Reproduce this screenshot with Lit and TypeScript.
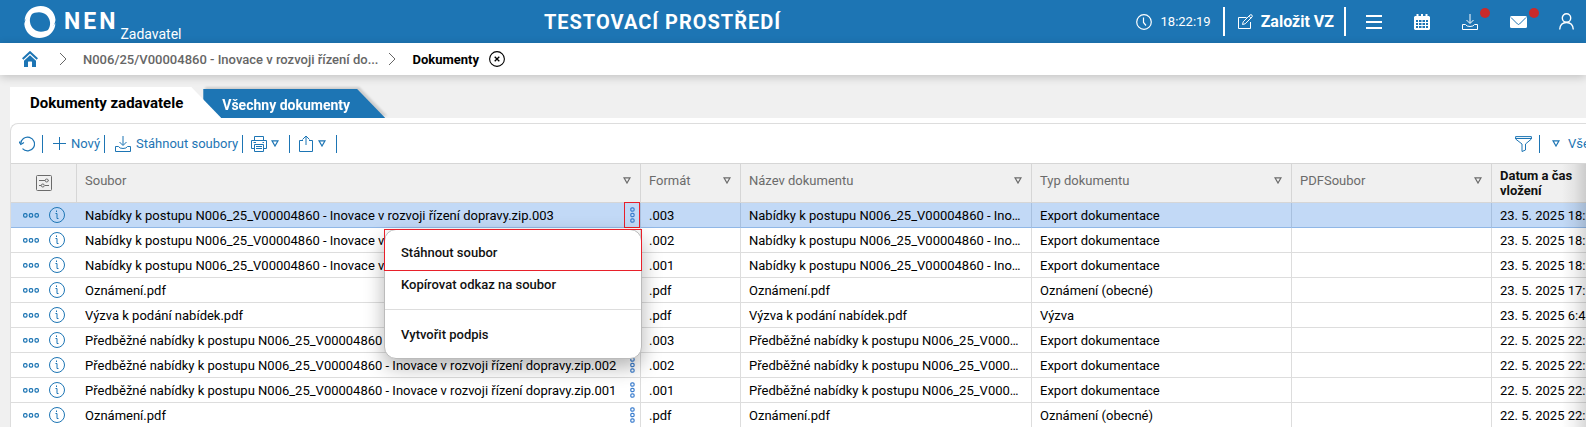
import { LitElement, html, css, svg } from "lit";
import { customElement, state } from "lit/decorators.js";

interface Doc {
  file: string;
  format: string;
  name: string;
  type: string;
  date: string;
}

const OFFER = "Nabídky k postupu N006_25_V00004860 - Inovace v rozvoji řízení dopravy.zip";
const EARLY = "Předběžné nabídky k postupu N006_25_V00004860 - Inovace v rozvoji řízení dopravy.zip";
const EXPORT = "Export dokumentace";

const doc = (base: string, format: string, type: string, date: string): Doc => ({
  file: base + format,
  format,
  name: base + format,
  type,
  date,
});

const DOCS: Doc[] = [
  doc(OFFER, ".003", EXPORT, "23. 5. 2025 18:20"),
  doc(OFFER, ".002", EXPORT, "23. 5. 2025 18:20"),
  doc(OFFER, ".001", EXPORT, "23. 5. 2025 18:20"),
  doc("Oznámení", ".pdf", "Oznámení (obecné)", "23. 5. 2025 17:10"),
  doc("Výzva k podání nabídek", ".pdf", "Výzva", "23. 5. 2025 6:45"),
  doc(EARLY, ".003", EXPORT, "22. 5. 2025 22:15"),
  doc(EARLY, ".002", EXPORT, "22. 5. 2025 22:15"),
  doc(EARLY, ".001", EXPORT, "22. 5. 2025 22:15"),
  doc("Oznámení", ".pdf", "Oznámení (obecné)", "22. 5. 2025 22:10"),
];

const icon = (w: number, h: number, body: unknown) => html`<svg
  width=${w}
  height=${h}
  viewBox="0 0 ${w} ${h}"
  fill="none"
  stroke="currentColor"
  aria-hidden="true"
>
  ${body}
</svg>`;

const logo = icon(32, 32, svg`
  <path fill="currentColor" stroke="none" d="M1.500 10C4 3.500 10 0 16.500 0C25 0 31 6 31.500 14C30.500 20.500 26.500 25.500 20.500 28C25 24 26.500 20 26 16C25.200 10 20.500 6.300 15 6.300C9 6.300 4 9.500 .7 15C.6 13.500 .9 11.700 1.500 10z"/>
  <path fill="currentColor" stroke="none" d="M30.500 22C28 28.500 22 32 15.500 32C7 32 1 26 .3 18C1.500 11.500 5.500 6.500 11.500 4C7 8 5.500 12 6 16C6.800 22 11.500 25.700 17 25.700C23 25.700 28 22.500 31.300 17C31.400 18.500 31.100 20.300 30.500 22z"/>`);
const clock = icon(16, 16, svg`<circle cx="8" cy="8" r="7.300" stroke-width="1.200"/><path stroke-width="1.200" d="M7.500 3.500V8.500L10 11.500"/>`);
const edit = icon(16, 16, svg`
  <path d="M9.500 3.500H1.500V14.500H13.500V8"/>
  <path d="M5.500 10.500L6.200 7.800L13 1Q14 .3 15 1.200Q15.700 2.200 15 3L8.200 9.800zM12 2.200L14 4.200"/>`);
const burger = icon(16, 14, svg`<path stroke-width="2" d="M0 1H16M0 7H16M0 13H16"/>`);
const calendar = icon(16, 16, svg`
  <path fill="currentColor" stroke="none" fill-rule="evenodd" d="M1 2H2.500V0H4.500V2H7V0H9V2H11.500V0H13.500V2H15L16 3V15L15 16H1L0 15V3zM2 6V14H14V6z"/>
  <path d="M2 8.500H14M2 11.500H14M4.500 6V14M8 6V14M11.500 6V14"/>`);
const download = icon(16, 16, svg`
  <path d="M8 0V9M4.500 6L8 9.500L11.500 6"/>
  <path d="M.5 10.500V15.500H15.500V10.500H12.500Q11.500 12.500 8 12.500Q4.500 12.500 3.500 10.500z"/>`);
const mail = icon(17, 12, svg`
  <rect width="17" height="12" rx="1.500" fill="currentColor" stroke="none"/>
  <path class="cut" d="M1 1.500L7.500 8Q8.500 9 9.500 8L16 1.500"/>`);
const user = icon(15, 17, svg`<circle cx="7.500" cy="5" r="4.200" stroke-width="1.400"/><path stroke-width="1.400" d="M.7 16.500Q1.200 9.500 7.500 9.500Q13.800 9.500 14.300 16.500"/>`);
const home = icon(16, 16, svg`
  <path stroke-width="2" d="M.7 8L8 1.200L15.300 8"/>
  <path fill="currentColor" stroke="none" d="M8 4.200L14 9.800V16H10V11Q10 10.500 9.500 10.500H6.500Q6 10.500 6 11V16H2V9.800z"/>`);
const chevron = icon(8, 14, svg`<path d="M1 1L7 7L1 13"/>`);
const close = icon(16, 16, svg`<circle cx="8" cy="8" r="7.400" stroke-width="1.100"/><path stroke-width="1.300" d="M5.700 5.700L10.300 10.300M10.300 5.700L5.700 10.300"/>`);
const refresh = icon(16, 16, svg`<path stroke-width="1.200" d="M1.700 8A6.900 6.900 0 1 1 3.500 12.600"/><path stroke-width="1.200" d="M0 5.500L1.800 8.500L5 6.500"/>`);
const plus = icon(13, 13, svg`<path d="M6.500 0V13M0 6.500H13"/>`);
const print = icon(16, 16, svg`
  <path d="M3.500 4.500V.5H12.500V4.500M3.500 12.500H.5V4.500H15.500V12.500H12.500"/>
  <path d="M3.500 8.500H12.500V15.500H3.500zM5 10.500H11M5 12.500H11M2.500 6.500H5M11.500 6.500H13"/>`);
const share = icon(16, 17, svg`<path d="M5 5.500H1.500V16.500H14.500V5.500H11M8 1V10M4.500 4.500L8 1L11.500 4.500"/>`);
const triangle = icon(8, 7, svg`<path stroke-width="1.200" d="M1 .8H7L4 6z"/>`);
const funnel = icon(17, 16, svg`<path d="M.6 .6H16.400V3L10.500 8V14L7 15.500V8L.6 3zM.6 2.500H16.400"/>`);
const settings = icon(16, 16, svg`
  <rect x=".5" y=".5" width="15" height="15" rx="1"/>
  <path d="M3 5.500H9M13 5.500H12.500M3 10.500H5M9 10.500H13"/>
  <circle cx="10.700" cy="5.500" r="1.500"/><circle cx="6.800" cy="10.500" r="1.500"/>`);
const dots = icon(16, 5, svg`<rect x=".6" y=".7" width="3.400" height="3.400" rx="1.300" stroke-width="1.200"/><rect x="6.300" y=".7" width="3.400" height="3.400" rx="1.300" stroke-width="1.200"/><rect x="12" y=".7" width="3.400" height="3.400" rx="1.300" stroke-width="1.200"/>`);
const kebab = icon(5, 16, svg`<rect y=".8" x=".8" width="3.300" height="3.300" rx="1.200" stroke-width="1.200"/><rect y="6.300" x=".8" width="3.300" height="3.300" rx="1.200" stroke-width="1.200"/><rect y="11.900" x=".8" width="3.300" height="3.300" rx="1.200" stroke-width="1.200"/>`);
const info = icon(16, 16, svg`<circle cx="8" cy="8" r="7.500"/><path d="M6.500 6.500H8V11.500H9.500M7.500 3.500V5"/>`);

const base = css`
  * {
    box-sizing: border-box;
  }
  svg {
    display: block;
    flex: none;
  }
  button {
    display: flex;
    align-items: center;
    border: 0;
    padding: 0;
    background: none;
    color: inherit;
    font: inherit;
    white-space: nowrap;
    cursor: pointer;
  }
  a {
    color: inherit;
    text-decoration: none;
  }
`;

@customElement("nen-header")
export class NenHeader extends LitElement {
  static styles = [
    base,
    css`
      :host {
        display: block;
      }
      .bar {
        display: flex;
        align-items: center;
        height: 43px;
        padding: 0 12px 0 24px;
        background: #1d75b4;
        color: #fff;
      }
      .brand {
        display: flex;
        align-items: center;
        height: 43px;
        padding-right: 8px;
      }
      .cut {
        stroke: #1d75b4;
      }
      .name {
        margin-left: 8px;
        font-size: 23px;
        font-weight: 700;
        letter-spacing: 3px;
      }
      .role {
        align-self: flex-end;
        margin-left: 2px;
        font-size: 14px;
        line-height: 18px;
      }
      .env {
        flex: 1;
        font-size: 20px;
        font-weight: 700;
        letter-spacing: 1px;
        text-align: center;
      }
      .tools {
        display: flex;
        align-items: center;
      }
      .time {
        display: flex;
        align-items: center;
        gap: 9px;
        padding-right: 12px;
        font-size: 13px;
      }
      .create {
        gap: 8px;
        height: 29px;
        padding: 0 10px 0 12px;
        border: solid #fff;
        border-width: 0 2px;
        font-size: 16px;
        font-weight: 700;
      }
      .icons {
        display: flex;
        align-items: center;
        gap: 32px;
        padding-left: 20px;
      }
      .badged {
        position: relative;
      }
      .badge {
        position: absolute;
        right: -12px;
        top: 50%;
        width: 10px;
        height: 10px;
        margin-top: -14px;
        border-radius: 50%;
        background: #c92a2a;
      }
    `,
  ];

  render() {
    return html`<header class="bar">
      <a class="brand" href="#">${logo}<span class="name">NEN</span><span class="role">Zadavatel</span></a>
      <span class="env">TESTOVACÍ PROSTŘEDÍ</span>
      <div class="tools">
        <span class="time">${clock}18:22:19</span>
        <button class="create">${edit}Založit VZ</button>
        <div class="icons">
          <button aria-label="Menu">${burger}</button>
          <button aria-label="Kalendář">${calendar}</button>
          <button class="badged" aria-label="Stažené soubory">${download}<span class="badge"></span></button>
          <button class="badged" aria-label="Zprávy">${mail}<span class="badge"></span></button>
          <button aria-label="Uživatel">${user}</button>
        </div>
      </div>
    </header>`;
  }
}

@customElement("nen-breadcrumbs")
export class NenBreadcrumbs extends LitElement {
  static styles = [
    base,
    css`
      :host {
        display: block;
        position: relative;
      }
      .trail {
        display: flex;
        align-items: center;
        height: 32px;
        padding: 0 22px;
        background: #fff;
        color: #666;
        box-shadow: 0 2px 10px rgba(0, 0, 0, 0.2);
        font-size: 13px;
        font-weight: 500;
      }
      .home {
        margin-right: 11px;
        color: #1d75b4;
      }
      .sep {
        margin: 0 16px 0 10px;
      }
      .current {
        color: #000;
        font-weight: 700;
      }
      .close {
        margin-left: 10px;
        color: #000;
      }
    `,
  ];

  render() {
    return html`<nav class="trail">
      <a class="home" href="#" aria-label="Domů">${home}</a>
      <span class="sep">${chevron}</span>
      <a href="#">N006/25/V00004860 - Inovace v rozvoji řízení do...</a>
      <span class="sep">${chevron}</span>
      <span class="current">Dokumenty</span>
      <button class="close" aria-label="Zavřít">${close}</button>
    </nav>`;
  }
}

@customElement("nen-toolbar")
export class NenToolbar extends LitElement {
  static styles = [
    base,
    css`
      :host {
        display: block;
      }
      .bar {
        display: flex;
        align-items: center;
        height: 39px;
        padding-left: 8px;
        color: #1d75b4;
        font-size: 13px;
      }
      .sep {
        width: 1px;
        height: 18px;
        background: #1d75b4;
      }
      .item {
        gap: 5px;
        padding: 0 4px 0 10px;
      }
      .refresh {
        padding: 0 7px 0 0;
      }
      .drop {
        gap: 4px;
        padding: 0 10px 0 8px;
      }
      .filter {
        margin-left: auto;
        padding-right: 7px;
      }
      .view {
        gap: 8px;
        width: 46px;
        padding-left: 12px;
        overflow: hidden;
      }
    `,
  ];

  render() {
    return html`<div class="bar" role="toolbar">
      <button class="refresh" aria-label="Obnovit">${refresh}</button>
      <span class="sep"></span>
      <button class="item">${plus}Nový</button>
      <span class="sep"></span>
      <button class="item">${download}Stáhnout soubory</button>
      <span class="sep"></span>
      <button class="drop" aria-label="Tisk">${print}${triangle}</button>
      <span class="sep"></span>
      <button class="drop" aria-label="Export">${share}${triangle}</button>
      <span class="sep"></span>
      <button class="filter" aria-label="Filtr">${funnel}</button>
      <span class="sep"></span>
      <button class="view">${triangle}Vše</button>
    </div>`;
  }
}

@customElement("nen-file-menu")
export class NenFileMenu extends LitElement {
  static styles = [
    base,
    css`
      :host {
        display: block;
      }
      .menu {
        width: 258px;
        border: 1px solid #bbb;
        border-radius: 12px;
        background: #fff;
        box-shadow: 0 8px 20px rgba(0, 0, 0, 0.3);
        color: #111;
        font-size: 13px;
        font-weight: 500;
      }
      .action {
        width: 100%;
        height: 32px;
        padding: 0 16px;
      }
      .marked {
        height: 42px;
        margin: -1px 0 0 -1px;
        width: calc(100% + 2px);
        padding-top: 4px;
        border: 1px solid #e8202a;
      }
      .copy {
        height: 26px;
      }
      .rule {
        height: 1px;
        margin: 12px 0 8px;
        background: #ddd;
      }
      .last {
        margin-bottom: 8px;
      }
    `,
  ];

  render() {
    return html`<div class="menu" role="menu">
      <button class="action marked" role="menuitem">Stáhnout soubor</button>
      <button class="action copy" role="menuitem">Kopírovat odkaz na soubor</button>
      <div class="rule"></div>
      <button class="action last" role="menuitem">Vytvořit podpis</button>
    </div>`;
  }
}

@customElement("nen-documents")
export class NenDocuments extends LitElement {
  @state() private selected = 0;

  static styles = [
    base,
    css`
      :host {
        display: block;
      }
      .grid {
        width: 100%;
        min-width: max-content;
        table-layout: fixed;
        border-collapse: separate;
        border-spacing: 0;
        color: #000;
        font-size: 13px;
        line-height: 15px;
      }
      .c-tools {
        width: 66px;
      }
      .c-file {
        width: 564px;
      }
      .c-format {
        width: 100px;
      }
      .c-name {
        width: 291px;
      }
      .c-type {
        width: 260px;
      }
      .c-pdf {
        width: 200px;
      }
      .c-date {
        width: 160px;
      }
      th {
        height: 40px;
        padding: 0 8px;
        border: solid #d6d6d6;
        border-width: 1px 1px 1px 0;
        background: #f0f0f0;
        color: #6b6b6b;
        font-weight: 400;
        text-align: left;
      }
      .head {
        display: flex;
        align-items: center;
        justify-content: space-between;
        padding: 0 1px 6px 0;
      }
      .sorted {
        color: #111;
        font-weight: 700;
      }
      .columns {
        margin: 0 auto;
      }
      td {
        height: 25px;
        padding: 0 8px;
        border: solid #ddd;
        border-width: 0 1px 1px 0;
        overflow: hidden;
        text-overflow: ellipsis;
        white-space: nowrap;
      }
      .on td {
        background: #c2d9f6;
        border-color: #a8c0de;
        border-bottom-color: #90b7e6;
      }
      .row-tools {
        display: flex;
        gap: 10px;
        padding-left: 4px;
        color: #1d75b4;
      }
      td.tools {
        border-right-width: 0;
      }
      td.file {
        overflow: visible;
        padding-right: 0;
      }
      .cell {
        display: flex;
        align-items: center;
        justify-content: space-between;
        position: relative;
        height: 24px;
      }
      .more {
        justify-content: center;
        width: 16px;
        height: 26px;
        border: 1px solid transparent;
        color: #3d7fcf;
      }
      .on .more {
        border-color: #e8202a;
      }
      .popup {
        position: absolute;
        top: 26px;
        right: -2px;
        z-index: 2;
      }
    `,
  ];

  private head(label: string) {
    return html`<th><div class="head">${label}<button aria-label="Filtrovat ${label}">${triangle}</button></div></th>`;
  }

  render() {
    return html`<table class="grid">
      <colgroup>
        <col class="c-tools" /><col class="c-file" /><col class="c-format" /><col class="c-name" />
        <col class="c-type" /><col class="c-pdf" /><col class="c-date" />
      </colgroup>
      <thead>
        <tr>
          <th><button class="columns" aria-label="Nastavení sloupců">${settings}</button></th>
          ${["Soubor", "Formát", "Název dokumentu", "Typ dokumentu", "PDFSoubor"].map((l) => this.head(l))}
          <th class="sorted">Datum a čas<br />vložení</th>
        </tr>
      </thead>
      <tbody>
        ${DOCS.map(
          (d, i) => html`<tr class=${i === this.selected ? "on" : ""} @click=${() => (this.selected = i)}>
            <td class="tools">
              <div class="row-tools">
                <button aria-label="Akce">${dots}</button>
                <button aria-label="Detail">${info}</button>
              </div>
            </td>
            <td class="file">
              <div class="cell">
                ${d.file}
                <button class="more" aria-label="Nabídka souboru">${kebab}</button>
                ${i === this.selected ? html`<nen-file-menu class="popup"></nen-file-menu>` : ""}
              </div>
            </td>
            <td>${d.format}</td>
            <td>${d.name}</td>
            <td>${d.type}</td>
            <td></td>
            <td>${d.date}</td>
          </tr>`,
        )}
      </tbody>
    </table>`;
  }
}

@customElement("app-root")
export class AppRoot extends LitElement {
  static styles = [
    base,
    css`
      :host {
        display: flex;
        flex-direction: column;
        height: 100vh;
        overflow: hidden;
        background: #f0f0f0;
        font-family: Roboto, "Liberation Sans", sans-serif;
      }
      .main {
        display: flex;
        flex: 1;
        flex-direction: column;
        min-height: 0;
        padding: 12px 0 0 10px;
      }
      .tabs {
        display: flex;
        align-items: flex-end;
        height: 31px;
      }
      .tab {
        display: flex;
        align-items: center;
        white-space: nowrap;
      }
      .front {
        z-index: 1;
        height: 31px;
        padding: 0 38px 0 20px;
        background: #fff;
        clip-path: polygon(0 0, calc(100% - 30px) 0, 100% 100%, 0 100%);
        color: #000;
        font-size: 15px;
        font-weight: 700;
      }
      .wrap {
        display: flex;
        margin-left: -18px;
        filter: drop-shadow(2px -2px 1px rgba(0, 0, 0, 0.15));
      }
      .back {
        height: 29px;
        padding: 2px 35px 0 19px;
        background: #1d75b4;
        clip-path: polygon(0 0, calc(100% - 28px) 0, 100% 100%, 0 100%);
        color: #fff;
        font-size: 14px;
        font-weight: 700;
      }
      .sheet {
        display: flex;
        flex: 1;
        min-height: 0;
        padding-top: 5px;
        background: #fff;
      }
      .card {
        flex: 1;
        min-width: 0;
        border: solid #ddd;
        border-width: 1px 0 0 1px;
        border-top-left-radius: 8px;
        background: #fff;
        overflow: hidden;
      }
      .data {
        position: relative;
      }
      .fade {
        position: absolute;
        top: 1px;
        right: 0;
        bottom: 0;
        width: 24px;
        background: linear-gradient(to right, rgba(0, 0, 0, 0), rgba(0, 0, 0, 0.05) 50%, rgba(0, 0, 0, 0.15));
        pointer-events: none;
      }
    `,
  ];

  render() {
    return html`<nen-header></nen-header>
      <nen-breadcrumbs></nen-breadcrumbs>
      <main class="main">
        <div class="tabs" role="tablist">
          <button class="tab front" role="tab" aria-selected="true">Dokumenty zadavatele</button>
          <div class="wrap"><button class="tab back" role="tab" aria-selected="false">Všechny dokumenty</button></div>
        </div>
        <section class="sheet">
          <div class="card">
            <nen-toolbar></nen-toolbar>
            <div class="data">
              <nen-documents></nen-documents>
              <div class="fade"></div>
            </div>
          </div>
        </section>
      </main>`;
  }
}
